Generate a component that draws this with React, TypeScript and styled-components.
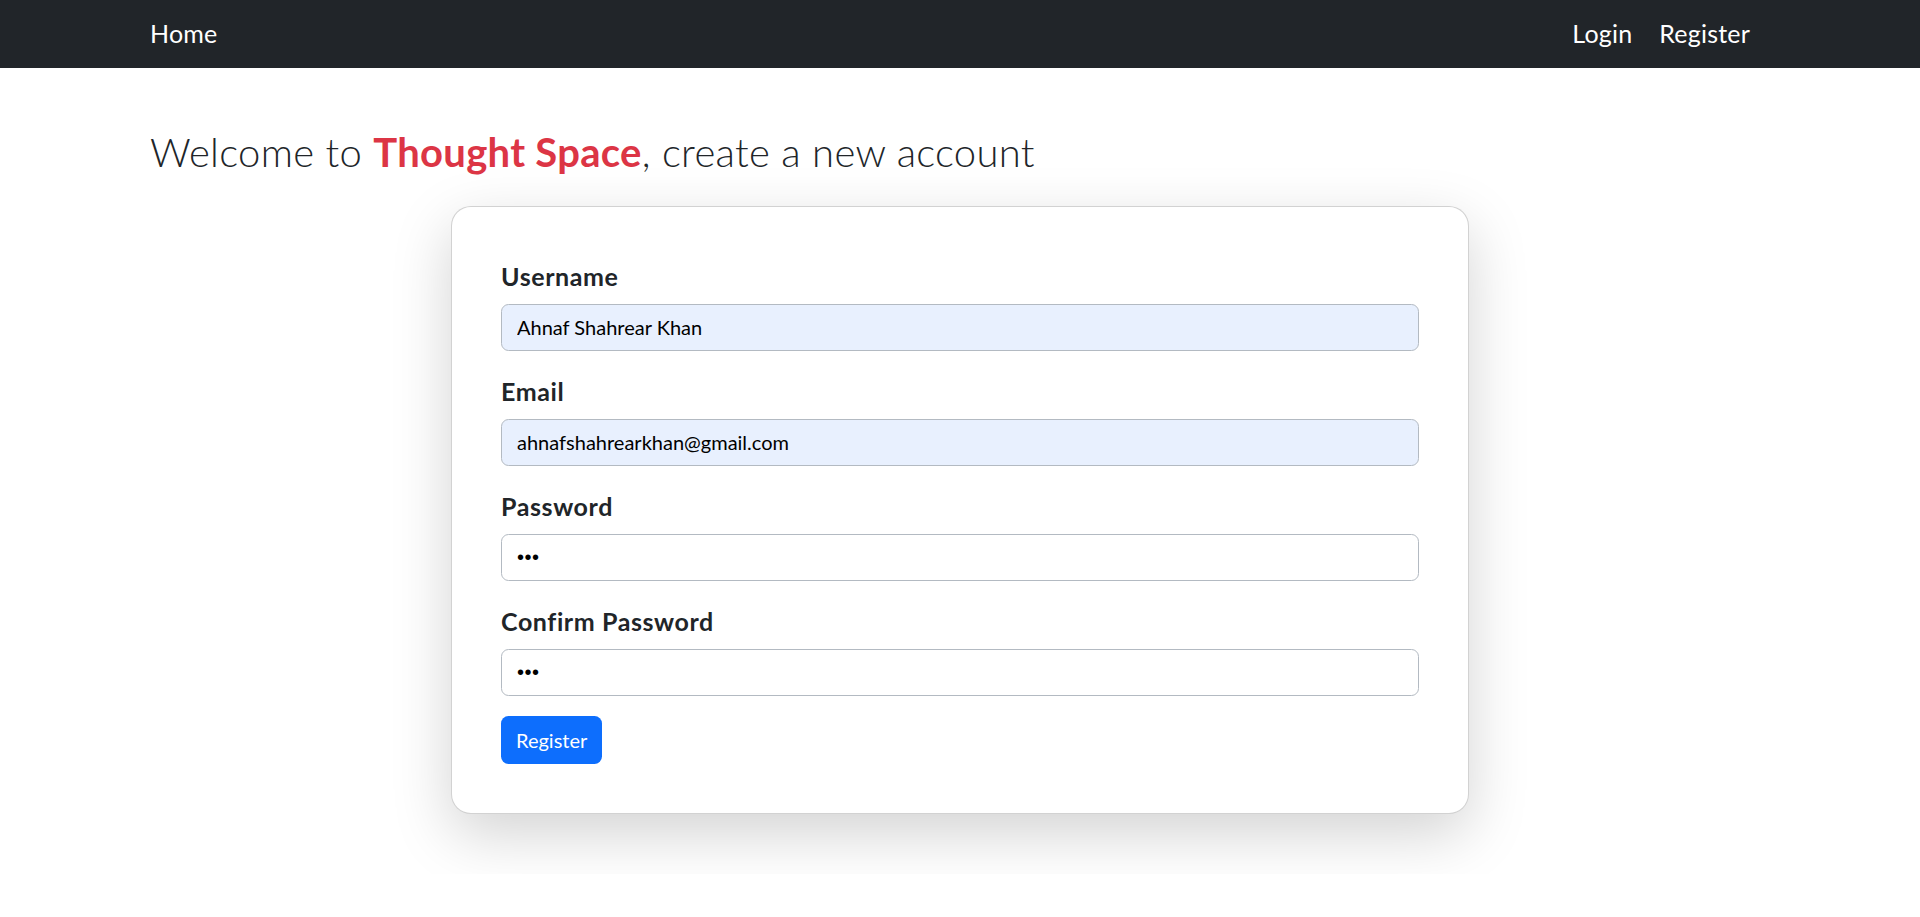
import React from "react";
import styled, { createGlobalStyle } from "styled-components";

const GlobalStyle = createGlobalStyle`
  * { box-sizing: border-box; }
  body {
    margin: 0;
    background: #ffffff;
    color: #212529;
    font-family: Lato, "Noto Sans", "Liberation Sans", sans-serif;
  }
`;

const NavBar = styled.nav`
  height: 68px;
  background: #212529;
  display: flex;
  align-items: center;
  justify-content: space-between;
  padding: 0 170px 0 150px;
`;

const NavGroup = styled.div`
  display: flex;
  align-items: center;
  gap: 27px;
`;

const NavLink = styled.a`
  color: #ffffff;
  font-size: 25px;
  line-height: 37.5px;
  text-decoration: none;
  letter-spacing: 0.2px;
  cursor: pointer;
`;

const Main = styled.main`
  padding: 0 150px;
`;

const Heading = styled.h2`
  margin: 60px 0 30px;
  font-size: 40px;
  line-height: 48px;
  font-weight: 300;
  letter-spacing: 0.3px;
  color: #212529;
`;

const Brand = styled.span`
  color: #dc3545;
  font-weight: 700;
`;

const Card = styled.form`
  width: 1018px;
  margin: 0 auto 60px;
  padding: 49px;
  background: #ffffff;
  border: 1px solid rgba(0, 0, 0, 0.175);
  border-radius: 20px;
  box-shadow: 0 20px 60px rgba(0, 0, 0, 0.175);
`;

const Field = styled.div`
  margin-bottom: 20px;
`;

const Label = styled.label`
  display: block;
  font-size: 25px;
  line-height: 37.5px;
  font-weight: 700;
  letter-spacing: 0.6px;
  padding-top: 2px;
  margin-bottom: 8px;
  color: #212529;
`;

const Input = styled.input<{ $filled?: boolean; $secret?: boolean }>`
  display: block;
  width: 100%;
  height: 47.5px;
  padding: 0 15px;
  font-family: ${(p) =>
    p.$secret
      ? '"Liberation Sans", Arial, sans-serif'
      : 'Lato, "Noto Sans", "Liberation Sans", sans-serif'};
  font-size: 20px;
  letter-spacing: ${(p) => (p.$secret ? "0.5px" : "0")};
  color: #000000;
  background: ${(p) => (p.$filled ? "#e8f0fe" : "#ffffff")};
  border: 1px solid #b3bac2;
  border-radius: 7.5px;
  outline: none;
`;

const Button = styled.button`
  height: 47.5px;
  padding: 0 15px;
  font-family: Lato, "Noto Sans", "Liberation Sans", sans-serif;
  font-size: 20px;
  color: #ffffff;
  background: #0d6efd;
  border: none;
  border-radius: 7.5px;
  cursor: pointer;
`;

const fields = [
  { id: "username", label: "Username", type: "text", value: "Ahnaf Shahrear Khan", filled: true },
  { id: "email", label: "Email", type: "email", value: "ahnafshahrearkhan@gmail.com", filled: true },
  { id: "password", label: "Password", type: "password", value: "123", filled: false },
  { id: "confirm", label: "Confirm Password", type: "password", value: "123", filled: false },
];

export default function App() {
  return (
    <>
      <GlobalStyle />
      <NavBar>
        <NavLink>Home</NavLink>
        <NavGroup>
          <NavLink>Login</NavLink>
          <NavLink>Register</NavLink>
        </NavGroup>
      </NavBar>
      <Main>
        <Heading>
          Welcome to <Brand>Thought Space</Brand>, create a new account
        </Heading>
        <Card onSubmit={(e) => e.preventDefault()}>
          {fields.map((f) => (
            <Field key={f.id}>
              <Label htmlFor={f.id}>{f.label}</Label>
              <Input
                id={f.id}
                type={f.type}
                defaultValue={f.value}
                $filled={f.filled}
                $secret={f.type === "password"}
                readOnly
              />
            </Field>
          ))}
          <Button type="submit">Register</Button>
        </Card>
      </Main>
    </>
  );
}
